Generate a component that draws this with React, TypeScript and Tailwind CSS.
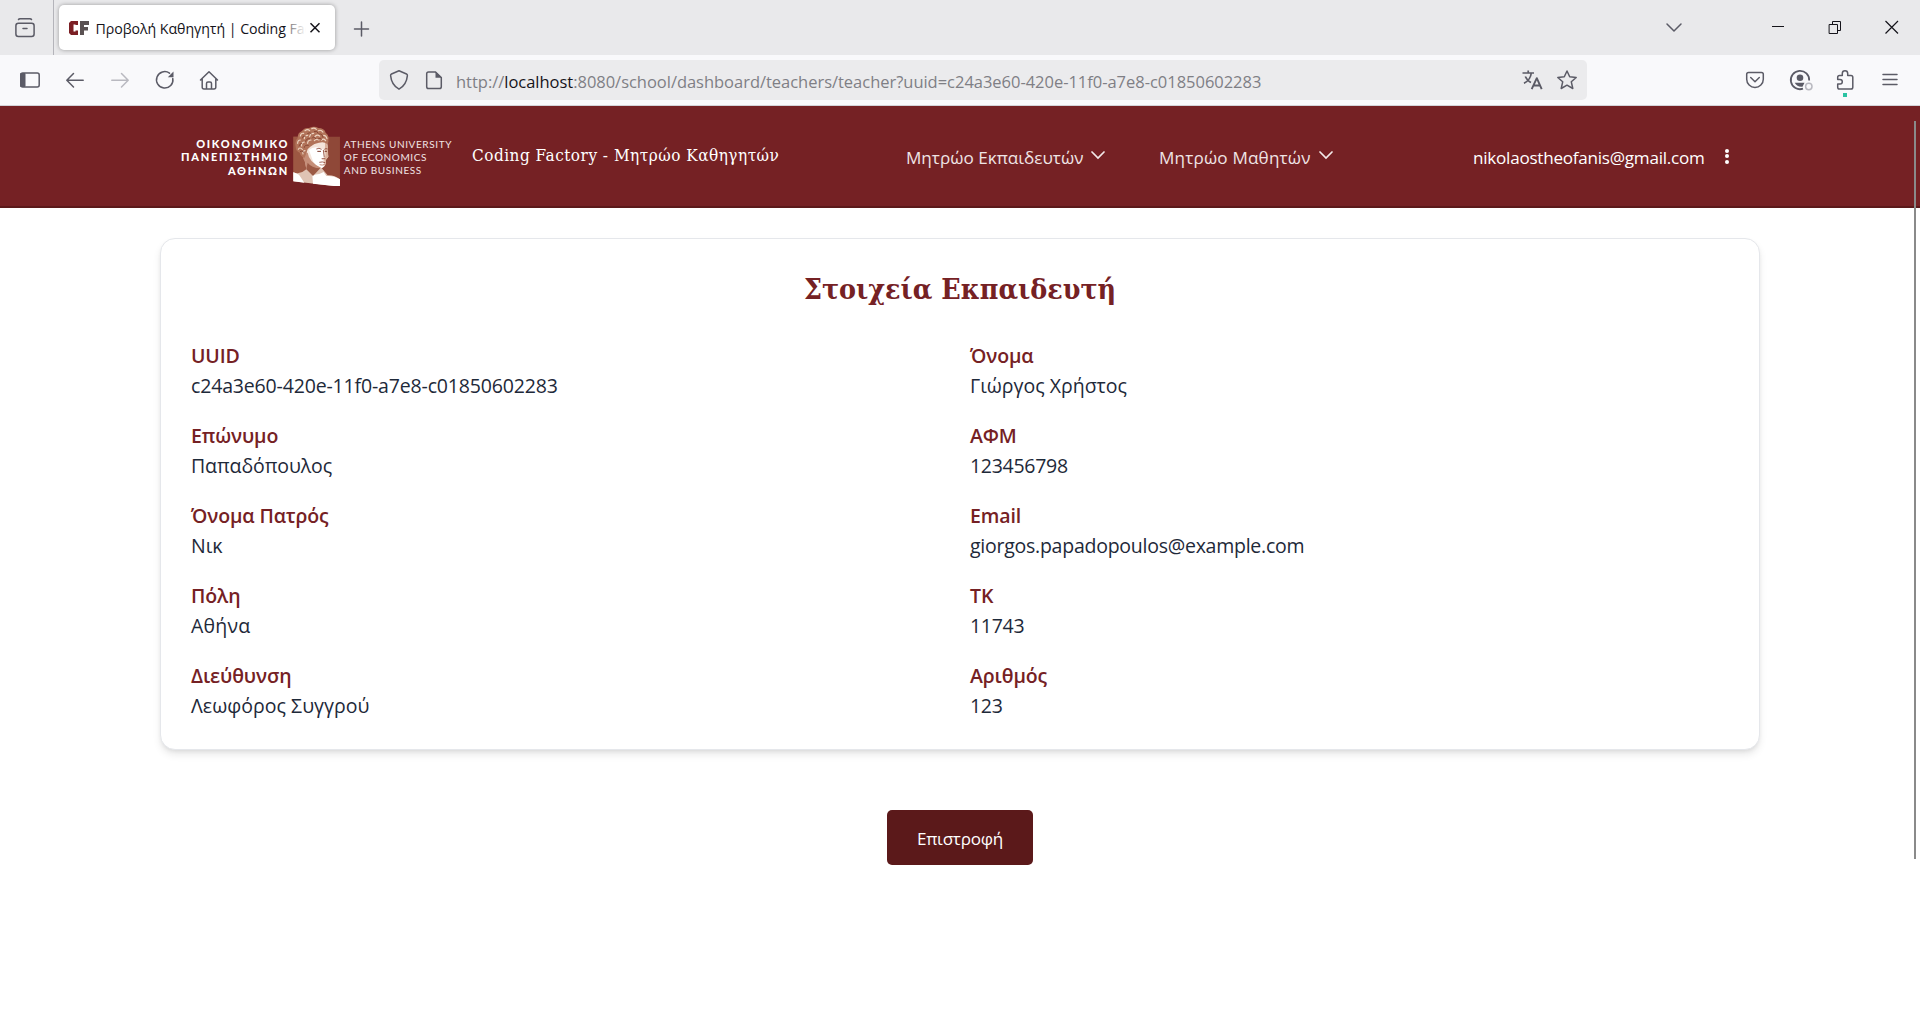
import type { ReactNode } from "react";

type IconProps = { children: ReactNode; className?: string };

function Icon({ children, className = "" }: IconProps) {
  return (
    <svg
      viewBox="0 0 20 20"
      fill="none"
      stroke="currentColor"
      strokeWidth="1.5"
      strokeLinecap="round"
      strokeLinejoin="round"
      className={`size-5 shrink-0 overflow-visible ${className}`}
    >
      {children}
    </svg>
  );
}

function Favicon() {
  return (
    <svg viewBox="0 0 20 14" className="h-[14px] w-5 shrink-0">
      <path d="M2 0H9V4H6.500V3.500H4.500V10.500H6.500V9.500H9V14H2L0 12V2Z" fill="#7b1f24" />
      <path d="M11 0H20V4H15V6H19V9.500H15V14H11Z" fill="#5a5152" />
    </svg>
  );
}

function TabStrip() {
  return (
    <div className="flex h-[55px] items-start bg-[#e9e9eb] text-[#5b5b66]">
      <div className="flex h-[55px] w-[54px] items-center border-r border-[#b4b4ba] pl-[15px]">
        <Icon>
          <rect x="0.900" y="5.300" width="18.200" height="13.200" rx="2.500" />
          <path d="M3.500 1.500Q4 0.700 5 0.700H15Q16 0.700 16.500 1.500M8 10.500H12" />
        </Icon>
      </div>
      <div className="mt-[5px] ml-[5px] flex h-[45px] w-[276px] items-center rounded-[5px] bg-white pl-[10px] shadow-[0_0_4px_rgba(0,0,0,0.35)]">
        <Favicon />
        <div className="relative mt-[2px] ml-[6.500px] w-[210px] overflow-hidden text-[14.200px] tracking-[-0.060px] whitespace-nowrap text-[#15141a]">
          Προβολή Καθηγητή | Coding Factory
          <div className="absolute inset-y-0 right-0 w-[18px] bg-gradient-to-r from-white/40 to-white" />
        </div>
        <Icon className="ml-[-1px] text-[#15141a]">
          <path d="M5.500 5.200L14.500 14.200M14.500 5.200L5.500 14.200" strokeLinecap="butt" />
        </Icon>
      </div>
      <Icon className="mt-[19px] ml-4">
        <path d="M10.500 3V17M3.500 10H17.500" />
      </Icon>
      <div className="mt-[17px] ml-auto flex w-[256px] items-center text-[#15141a]">
        <Icon className="text-[#5b5b66]">
          <path d="M3 7L10 14L17 7" />
        </Icon>
        <Icon className="ml-[84px]">
          <path d="M4 9.500H16" strokeWidth="1" strokeLinecap="butt" />
        </Icon>
        <Icon className="ml-[37px]">
          <path d="M4.500 7.500H12.500V16.500H4.500ZM7.500 7V4.500H15.500V13.500H13" strokeWidth="1" strokeLinejoin="miter" />
        </Icon>
        <Icon className="ml-[37px]">
          <path d="M3.500 4L16 16.500M16 4L3.500 16.500" strokeWidth="1.200" strokeLinecap="butt" />
        </Icon>
      </div>
    </div>
  );
}

function Toolbar() {
  return (
    <div className="flex h-[51px] items-center border-b border-[#d3d3d8] bg-[#f9f9fb] pl-5 text-[#5b5b66]">
      <div className="flex w-[359px] gap-[25px]">
        <Icon>
          <rect x="0.800" y="3" width="18.400" height="14" rx="2" />
          <path d="M1 3.500H5V16.500H1Z" fill="currentColor" strokeWidth="1" />
        </Icon>
        <Icon>
          <path d="M18.200 10.300H2M8.500 3.500L1.800 10.300L8.500 17" />
        </Icon>
        <Icon className="text-[#b9b9c0]">
          <path d="M1.800 10.300H18M11.500 3.500L18.200 10.300L11.500 17" />
        </Icon>
        <Icon>
          <path d="M17.800 8.500A8.200 8.200 0 1 1 14.500 3.200" />
          <path d="M18.500 1.500V7.300H12.800Z" fill="currentColor" stroke="none" />
        </Icon>
        <Icon className="-ml-[0.700px]">
          <path d="M1.500 10L10 1.700L18.500 10M3.200 8.500V17.300Q3.200 19 5 19H15Q16.800 19 16.800 17.300V8.500M7.500 19V13.500Q7.500 12 9 12H11Q12.500 12 12.500 13.500V19" />
        </Icon>
      </div>
      <div className="flex h-10 w-[1208px] items-center rounded-[5px] bg-[#ebebed] px-[10px]">
        <Icon>
          <path d="M10 0.800L17.500 4Q18.500 4.500 18.400 5.600Q17.500 15 10 19.200Q2.500 15 1.600 5.600Q1.500 4.500 2.500 4Z" />
        </Icon>
        <Icon className="ml-[15px]">
          <path d="M11.500 2H4.500Q2.700 2 2.700 3.800V16.700Q2.700 18.500 4.500 18.500H15.500Q17.300 18.500 17.300 16.700V7.500Z" />
          <path d="M11.500 1.500L17.800 7.800H11.500Z" fill="currentColor" stroke="none" />
        </Icon>
        <div className="mt-[5px] ml-3 flex-1 text-[16.500px] tracking-[-0.025px] whitespace-nowrap text-[#7f7f85]">
          http://<span className="text-[#15141a]">localhost</span>:8080/school/dashboard/teachers/teacher?uuid=c24a3e60-420e-11f0-a7e8-c01850602283
        </div>
        <Icon>
          <path d="M0.500 3H12M6.200 0.500V3M2 13.300Q8.500 10 9.300 3M3.300 6.500Q5.500 11 9 12.500" strokeLinecap="butt" strokeWidth="1.700" />
          <path d="M9.700 19.200L14.800 8.200L19.700 19.200M11.500 15.500H18" strokeLinecap="butt" strokeWidth="1.900" />
        </Icon>
        <Icon className="ml-[15px]">
          <path d="M10 1L12.700 6.800L19.200 7.500L14.300 11.800L15.800 18.500L10 15.200L4.200 18.500L5.700 11.800L0.800 7.500L7.300 6.800Z" />
        </Icon>
      </div>
      <div className="ml-[158px] flex gap-[25px]">
        <Icon>
          <path d="M3.500 2.500H16.500Q18.300 2.500 18.300 4.300V9.200A8.300 8.300 0 0 1 1.700 9.200V4.300Q1.700 2.500 3.500 2.500ZM5.700 7.500L10 11.700L14.300 7.500" />
        </Icon>
        <Icon>
          <path d="M13 18.700A9.200 9.200 0 1 1 19.200 10.500" strokeWidth="1.800" strokeLinecap="butt" />
          <circle cx="10" cy="7.800" r="3.300" fill="currentColor" stroke="none" />
          <path d="M4.700 12.700H14.500L12.500 16.700Q7.500 17.500 4.700 12.700Z" fill="currentColor" stroke="none" />
          <circle cx="18.800" cy="16.500" r="3.200" stroke="#b9b9c0" />
        </Icon>
        <div className="relative size-5">
          <Icon>
            <path d="M7.300 5.500V3.500A2.700 2.700 0 0 1 12.700 3.500V5.500H16Q17.800 5.500 17.800 7.300V17.300Q17.800 19.100 16 19.100H4.500Q2.700 19.100 2.700 17.300V14H5A2.300 2.300 0 0 0 5 9.400H2.700V7.300Q2.700 5.500 4.500 5.500Z" />
          </Icon>
          <div className="absolute top-[23px] left-2 size-1 bg-[#2ac3a2]" />
        </div>
        <Icon>
          <path d="M3 4.500H17M3 9.500H17M3 14.500H17" />
        </Icon>
      </div>
    </div>
  );
}

function HermesHead() {
  return (
    <svg viewBox="0 0 142 182" className="h-[60.700px] w-[47.300px]">
      <path d="M1 32H141V182L1 166Z" fill="#8f4838" />
      <path d="M1 32H40V150H1Z" fill="#9d5843" />
      <path d="M34 92L40 130Q30 140 14 142L1 140V166L141 182V160Q122 146 104 148L84 124Z" fill="#dfc3b4" />
      <path d="M58 146Q76 148 92 138L100 150Q122 148 141 160V182L60 173Z" fill="#fff" />
      <path d="M1 138L18 146L34 170L1 166Z" fill="#fff" />
      <path d="M40 66Q62 40 102 46Q105 60 104 76L106 92L99 101L99 110Q96 124 84 126Q66 124 54 112L40 96Z" fill="#f4e4da" />
      <path d="M48 72Q62 60 82 66L90 70L93 94L86 98Q94 104 92 122Q88 126 84 126Q68 120 60 106Z" fill="#fff" />
      <path d="M34 84L44 80Q48 108 84 125Q74 134 56 126L40 130Q40 112 30 96Z" fill="#c58e78" />
      <path d="M44 110Q56 126 82 127L60 150Q50 140 40 130Z" fill="#9c5a45" />
      <path d="M96 48Q106 54 105 74L106 92L99 101L98 112L92 120Q96 108 94 98Q100 92 96 72Z" fill="#d9b19c" />
      <path d="M8 62Q4 44 14 36Q14 20 26 16Q34 4 48 6Q64 -2 76 6Q94 6 98 20Q110 28 106 42Q108 50 102 54Q94 46 78 50Q64 52 52 62L44 70Q40 84 34 96Q22 90 20 80Q8 76 8 62Z" fill="#b27359" />
      <g fill="none" stroke="#edd5c3" strokeWidth="3.500" strokeLinecap="round">
        <path d="M14 52Q14 42 22 42M22 30Q24 20 32 22M36 14Q44 8 50 14M56 8Q64 4 70 10M76 14Q84 10 90 18M92 28Q100 28 102 38M34 38Q34 28 44 28M50 32Q52 22 62 22M66 32Q72 24 80 30M26 60Q24 50 34 48M44 52Q44 42 54 42M64 44Q70 38 78 42M86 42Q92 36 98 44M16 70Q20 62 28 70M30 84Q28 76 36 74" />
      </g>
      <g fill="none" stroke="#80402f" strokeWidth="2.500" strokeLinecap="round">
        <path d="M18 60Q20 52 26 52M28 36Q28 28 38 30M44 22Q52 16 56 24M64 16Q72 12 76 22M80 24Q88 22 90 34M38 46Q40 36 50 38M58 36Q62 28 68 38M76 38Q82 34 86 40M34 64Q34 56 46 58M22 76Q26 72 32 78" />
      </g>
      <path d="M70 69Q78 64 86 70M94 70Q99 66 104 69" fill="none" stroke="#8f4838" strokeWidth="2.500" />
      <path d="M73 76H84M95 76H102" stroke="#7a3629" strokeWidth="3" />
      <path d="M91 72L94 94M86 98H97M79 109Q88 106 97 110" fill="none" stroke="#8f4838" strokeWidth="2.500" />
      <path d="M80 116Q88 119 95 115" fill="none" stroke="#b97c66" strokeWidth="2.500" />
    </svg>
  );
}

function UniversityLogo() {
  return (
    <div className="flex w-[292px] items-center">
      <div className="mt-[2px] w-[129.700px] text-right font-['Lato','Open_Sans',sans-serif] text-[11px] leading-[13.400px] font-black tracking-[1.700px] whitespace-nowrap text-white">
        <div>ΟΙΚΟΝΟΜΙΚΟ</div>
        <div>ΠΑΝΕΠΙΣΤΗΜΙΟ</div>
        <div>ΑΘΗΝΩΝ</div>
      </div>
      <div className="ml-[3.500px]">
        <HermesHead />
      </div>
      <div className="mt-[3px] ml-[4px] font-['Lato',sans-serif] text-[10px] leading-[13.200px] tracking-[0.600px] whitespace-nowrap text-[#f1e4e4]">
        <div>ATHENS UNIVERSITY</div>
        <div>OF ECONOMICS</div>
        <div>AND BUSINESS</div>
      </div>
    </div>
  );
}

function Chevron() {
  return (
    <svg viewBox="0 0 14 9" fill="none" stroke="#f3e9e9" strokeWidth="1.700" strokeLinecap="round" className="mb-[3px] h-[9px] w-[14px]">
      <path d="M1 1L7 7L13 1" />
    </svg>
  );
}

function SiteHeader() {
  return (
    <header className="flex h-[102px] items-center border-b-2 border-[#5b191a] bg-[#752124] pl-[160px] whitespace-nowrap text-white">
      <UniversityLogo />
      <div className="ml-[20px] w-[434px] font-['DejaVu_Serif_Condensed','DejaVu_Serif',serif] text-[17px] tracking-[0.500px]">
        Coding Factory - Μητρώο Καθηγητών
      </div>
      <nav className="mt-[3px] flex text-[17.100px] text-[#efe4e5]">
        <div className="flex w-[253px] items-center gap-[8px]">
          Μητρώο Εκπαιδευτών
          <Chevron />
        </div>
        <div className="flex w-[314px] items-center gap-[8px] tracking-[0.180px]">
          Μητρώο Μαθητών
          <Chevron />
        </div>
      </nav>
      <div className="mt-[3px] w-[252px] text-[17.100px] tracking-[-0.250px]">nikolaostheofanis@gmail.com</div>
      <div className="flex flex-col gap-[1.500px]">
        <span className="size-1 rounded-full bg-white" />
        <span className="size-1 rounded-full bg-white" />
        <span className="size-1 rounded-full bg-white" />
      </div>
    </header>
  );
}

const fields = [
  { label: "UUID", value: "c24a3e60-420e-11f0-a7e8-c01850602283", tracking: "tracking-[-0.160px]" },
  { label: "Όνομα", value: "Γιώργος Χρήστος", tracking: "tracking-normal" },
  { label: "Επώνυμο", value: "Παπαδόπουλος", tracking: "tracking-[-0.080px]" },
  { label: "ΑΦΜ", value: "123456798", tracking: "tracking-[-0.290px]" },
  { label: "Όνομα Πατρός", value: "Νικ", tracking: "tracking-normal" },
  { label: "Email", value: "giorgos.papadopoulos@example.com", tracking: "tracking-[-0.250px]" },
  { label: "Πόλη", value: "Αθήνα", tracking: "tracking-[0.200px]" },
  { label: "ΤΚ", value: "11743", tracking: "tracking-[-0.290px]" },
  { label: "Διεύθυνση", value: "Λεωφόρος Συγγρού", tracking: "tracking-[0.030px]" },
  { label: "Αριθμός", value: "123", tracking: "tracking-[-0.290px]" },
];

function TeacherCard() {
  return (
    <section className="w-[1600px] rounded-[15px] border border-gray-200 bg-white px-[30px] pt-[30px] pb-[28px] shadow-[0_5px_8px_-1px_rgba(0,0,0,0.1),0_2px_5px_-2px_rgba(0,0,0,0.1)]">
      <h1 className="text-center font-['DejaVu_Serif_Condensed','DejaVu_Serif',serif] text-[28.300px] leading-10 font-bold text-[#752124]">
        Στοιχεία Εκπαιδευτή
      </h1>
      <div className="mt-[32px] grid grid-cols-2 gap-5 text-[19.500px] leading-[30px]">
        {fields.map((f) => (
          <div key={f.label}>
            <div className="font-semibold tracking-[-0.120px] text-[#752124]">{f.label}</div>
            <div className={`text-[#1e2939] ${f.tracking}`}>{f.value}</div>
          </div>
        ))}
      </div>
    </section>
  );
}

export default function App() {
  return (
    <div className="relative flex h-[1020px] w-[1920px] flex-col overflow-hidden bg-white font-['Open_Sans','Noto_Sans',sans-serif]">
      <TabStrip />
      <Toolbar />
      <SiteHeader />
      <main className="flex flex-col items-center pt-[30px]">
        <TeacherCard />
        <button className="mt-[60px] h-[55px] w-[146px] rounded-[5px] bg-[#5b191a] pt-[2px] text-[17.100px] tracking-[-0.250px] text-white">
          Επιστροφή
        </button>
      </main>
      <div className="absolute top-[121px] right-1 h-[738px] w-[2px] bg-[#8a8a8a]" />
    </div>
  );
}
